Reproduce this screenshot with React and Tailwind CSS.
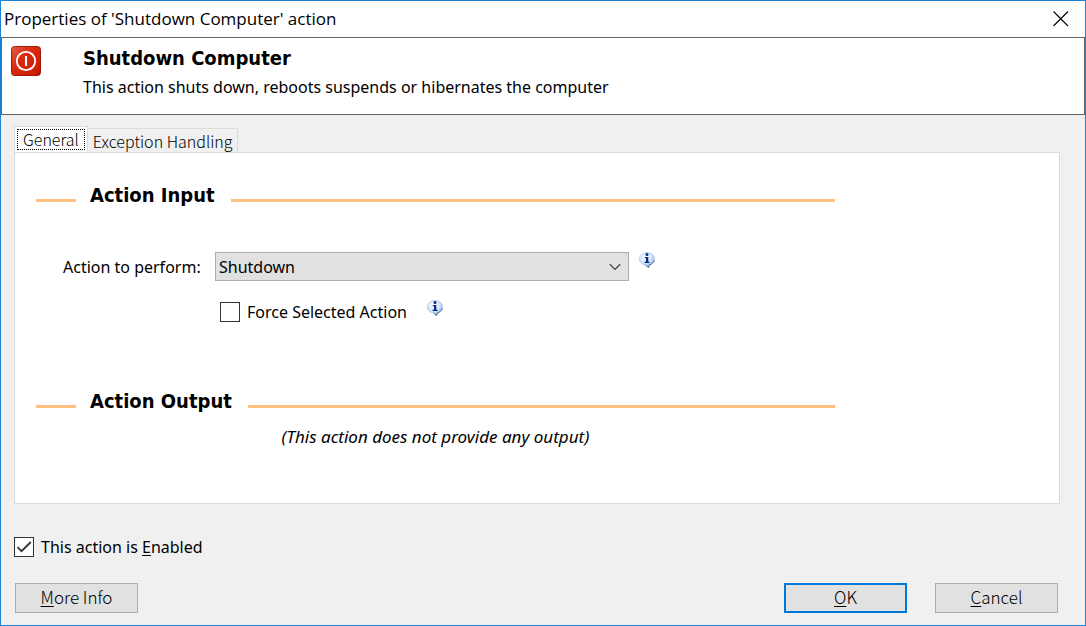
import { useState } from 'react';

const App = () => {
  const [tab, setTab] = useState('general');
  const [force, setForce] = useState(false);
  const [enabled, setEnabled] = useState(true);

  return (
    <div className="flex min-h-screen flex-col border border-[#1883d7] bg-[#f0f0f0] text-base leading-5 text-black font-['Noto_Sans',sans-serif]">
      {/* Title bar */}
      <header className="flex h-9 items-center justify-between bg-white pl-[3px] pr-4">
        <h1 className="text-[17px] leading-6 font-['Open_Sans',sans-serif]">Properties of 'Shutdown Computer' action</h1>
        <button type="button" aria-label="Close">
          <CloseIcon />
        </button>
      </header>

      {/* Banner */}
      <section className="flex h-[78px] gap-[42px] border border-[#646464] bg-white pl-[9px] pt-2">
        <PowerIcon />
        <div className="flex flex-col gap-[7px]">
          <h2 className="text-xl leading-6 font-bold font-['DejaVu_Sans_Condensed',sans-serif]">Shutdown Computer</h2>
          <p>This action shuts down, reboots suspends or hibernates the computer</p>
        </div>
      </section>

      <main className="flex flex-1 flex-col pl-[13px] pr-[25px] pt-[11px]">
        {/* Tabs */}
        <div role="tablist" className="flex items-end font-light font-['Noto_Sans_CJK_JP',sans-serif]">
          <Tab label="General" selected={tab === 'general'} onClick={() => setTab('general')} />
          <Tab label="Exception Handling" selected={tab === 'exception'} onClick={() => setTab('exception')} />
        </div>

        <div role="tabpanel" className="min-h-[352px] border border-[#dcdcdc] bg-white pl-[21px] pr-6 pt-[30px]">
          <div className="max-w-[799px]">
            <SectionTitle>Action Input</SectionTitle>

            <div className="mt-[45px] flex items-start pl-[27px]">
              <label htmlFor="action" className="w-38 pt-[5px]">Action to perform:</label>
              <div className="grid w-[414px] items-center">
                <select
                  id="action"
                  className="col-start-1 row-start-1 h-[29px] appearance-none border border-[#adadad] bg-[#e1e1e1] px-[3px] leading-5"
                >
                  <option>Shutdown</option>
                  <option>Reboot</option>
                  <option>Suspend</option>
                  <option>Hibernate</option>
                </select>
                <ChevronIcon />
              </div>
              <InfoIcon className="ml-2.5" />
            </div>

            <div className="mt-[21px] flex items-start pl-[184px]">
              <label className="flex items-center gap-[7px]">
                <CheckBox checked={force} onChange={setForce} />
                Force Selected Action
              </label>
              <InfoIcon className="-mt-0.5 ml-5" />
            </div>

            <div className="mt-[67px]">
              <SectionTitle>Action Output</SectionTitle>
            </div>
            <p className="mt-3.5 text-center text-[17px] leading-5 italic">(This action does not provide any output)</p>
          </div>
        </div>

        <div className="mt-[33px] flex">
          <label className="flex items-center gap-[7px]">
            <CheckBox checked={enabled} onChange={setEnabled} />
            <span>This action is <u className="underline-offset-2">E</u>nabled</span>
          </label>
        </div>

        {/* Buttons */}
        <footer className="mt-[26px] flex justify-between pl-px pr-0.5">
          <DialogButton hotkey="M" rest="ore Info" />
          <div className="flex gap-7">
            <DialogButton hotkey="O" rest="K" primary />
            <DialogButton hotkey="C" rest="ancel" />
          </div>
        </footer>
      </main>
    </div>
  );
};

const Tab = ({ label, selected, onClick }) => (
  <button
    type="button"
    role="tab"
    aria-selected={selected}
    onClick={onClick}
    className={
      selected
        ? '-mb-px border border-b-0 border-[#dcdcdc] bg-white p-0.5 pb-[3px]'
        : 'h-6 border border-l-0 border-b-0 border-[#dcdcdc] px-[5px]'
    }
  >
    <span className={selected ? 'block border border-dotted border-black px-[5px] leading-[19px]' : 'block leading-[22px]'}>
      {label}
    </span>
  </button>
);

const SectionTitle = ({ children }) => (
  <div className="flex items-center">
    <span className="mt-2.5 h-[3px] w-10 bg-[#ffc080]" />
    <h3 className="ml-3.5 mr-4 text-xl leading-6 font-bold font-['DejaVu_Sans_Condensed',sans-serif]">{children}</h3>
    <span className="mt-2.5 h-[3px] flex-1 bg-[#ffc080]" />
  </div>
);

const CheckBox = ({ checked, onChange }) => (
  <span className="grid size-5">
    <input
      type="checkbox"
      checked={checked}
      onChange={(e) => onChange(e.target.checked)}
      className="col-start-1 row-start-1 size-5 appearance-none border border-[#333] bg-white"
    />
    {checked && (
      <svg className="pointer-events-none col-start-1 row-start-1 size-5" viewBox="0 0 20 20" fill="none" stroke="#333" strokeWidth="1.8">
        <path d="M3.5 10.2l4 4L16.8 5" />
      </svg>
    )}
  </span>
);

const DialogButton = ({ hotkey, rest, primary }) => (
  <button
    type="button"
    className={`h-[30px] w-[123px] bg-[#e1e1e1] pb-0.5 text-[17px] font-light leading-6 font-['Noto_Sans_CJK_JP',sans-serif] ${primary ? 'border-2 border-[#0078d7]' : 'border border-[#adadad]'}`}
  >
    <u className="underline-offset-2">{hotkey}</u>{rest}
  </button>
);

// Icons
const CloseIcon = () => (
  <svg className="size-4" viewBox="0 0 16 16" fill="none" stroke="#000" strokeWidth="1.1">
    <path d="M0.5 0.5l14.5 14.5M15 0.5l-14.5 14.5" />
  </svg>
);

const ChevronIcon = () => (
  <svg className="pointer-events-none col-start-1 row-start-1 mr-2 h-2 w-3 justify-self-end" viewBox="0 0 12 8" fill="none" stroke="#444" strokeWidth="1.3">
    <path d="M0.8 1.2L6 6.4l5.2-5.2" />
  </svg>
);

const PowerIcon = () => (
  <svg className="size-[30px] shrink-0" viewBox="0 0 30 30">
    <defs>
      <linearGradient id="power" x1="0" y1="0" x2="1" y2="1">
        <stop offset="0" stopColor="#e2604a" />
        <stop offset="0.4" stopColor="#d92a10" />
        <stop offset="0.85" stopColor="#cf1d04" />
        <stop offset="1" stopColor="#8e1000" />
      </linearGradient>
    </defs>
    <rect x="0.5" y="0.5" width="29" height="29" rx="3" fill="url(#power)" stroke="#a31a08" />
    <circle cx="15" cy="15" r="9.2" fill="none" stroke="#fff" strokeWidth="1.8" />
    <path d="M15 10v10" stroke="#fff" strokeWidth="2" />
  </svg>
);

const InfoIcon = ({ className }) => (
  <svg className={`size-4 shrink-0 ${className}`} viewBox="0 0 16 16" role="img" aria-label="Info">
    <defs>
      <radialGradient id="bubble" cx="0.4" cy="0.3" r="0.75">
        <stop offset="0" stopColor="#fff" />
        <stop offset="0.5" stopColor="#d9e8fa" />
        <stop offset="1" stopColor="#7fa8e0" />
      </radialGradient>
    </defs>
    <path d="M8 0.5c4 0 7.5 2.7 7.5 6.3 0 3-2.2 5.2-4.9 6.1L9.4 15.7 7 13.2C3.2 12.8 0.5 10.3 0.5 6.8 0.5 3.2 4 0.5 8 0.5z" fill="url(#bubble)" stroke="#a9c0df" strokeWidth="0.7" />
    <path d="M15.3 8.2c-.7 2.5-2.5 4-4.7 4.7L9.4 15.7 7 13.2" fill="none" stroke="#3d6391" strokeWidth="0.9" />
    <circle cx="8" cy="2.6" r="1.5" fill="#0a2a8c" />
    <path d="M5.8 5h3.5v4.8h1.2V11H5.6V9.8H7V6.2H5.8z" fill="#0a2a8c" />
  </svg>
);

export default App;
